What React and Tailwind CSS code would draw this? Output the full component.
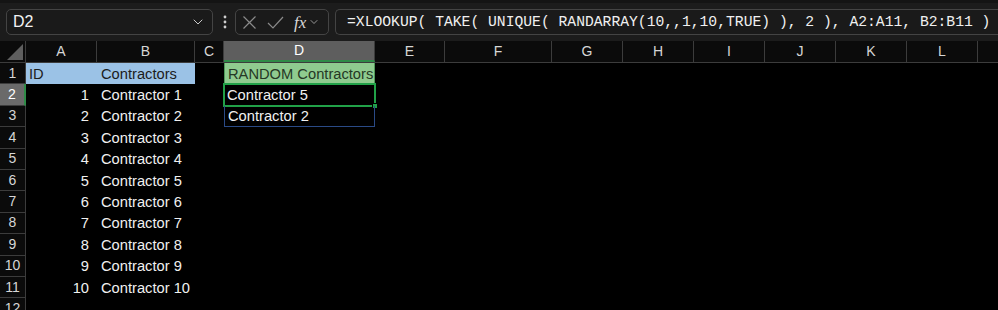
import React from 'react';
import { ChevronDown } from 'lucide-react';

const cols = [
  { name: 'A', w: 'w-[71px]' },
  { name: 'B', w: 'w-[98px]' },
  { name: 'C', w: 'w-[29px]' },
  { name: 'D', w: 'w-[151px]' },
  { name: 'E', w: 'w-[70px]' },
  { name: 'F', w: 'w-[107px]' },
  { name: 'G', w: 'w-[71px]' },
  { name: 'H', w: 'w-[71px]' },
  { name: 'I', w: 'w-[71px]' },
  { name: 'J', w: 'w-[71px]' },
  { name: 'K', w: 'w-[71px]' },
  { name: 'L', w: 'w-[71px]' },
  { name: '', w: 'w-[71px]' },
];

const rows = Array.from({ length: 12 }, (_, i) => i + 1);

const Toolbar = () => (
  <div className="h-[38px] bg-[#1c1c1c] flex items-center shrink-0">
    {/* Cuadro de nombre */}
    <div className="ml-[6px] w-[207px] h-[26px] rounded-[5px] border border-[#444] bg-[#1a1a1a] flex items-center justify-between pl-[6px] pr-[6px]">
      <span className="text-[16px] text-[#f2f2f2]">D2</span>
      <ChevronDown size={16} strokeWidth={1.5} className="text-[#c8c8c8]" />
    </div>

    <svg width="4" height="14" viewBox="0 0 4 14" className="ml-[10px] mr-[8px]">
      <circle cx="2" cy="2" r="1.4" fill="#cfcfcf" />
      <circle cx="2" cy="7" r="1.4" fill="#cfcfcf" />
      <circle cx="2" cy="12" r="1.4" fill="#cfcfcf" />
    </svg>

    {/* Cancelar / aceptar / fx */}
    <div className="w-[94px] h-[26px] rounded-[5px] border border-[#444] bg-[#1a1a1a] flex items-center pl-[6px] gap-[6px]">
      <svg width="15" height="15" viewBox="0 0 15 15">
        <path d="M1.5 1.5 L13.5 13.5 M13.5 1.5 L1.5 13.5" stroke="#8a8a8a" strokeWidth="1.2" fill="none" />
      </svg>
      <svg width="17" height="15" viewBox="0 0 17 15" className="ml-[4px]">
        <path d="M1 8 L6 13 L16 2" stroke="#8a8a8a" strokeWidth="1.2" fill="none" />
      </svg>
      <span className="ml-[4px] text-[17px] italic text-[#d8d8d8] leading-none" style={{ fontFamily: '"Liberation Serif", serif' }}>fx</span>
      <ChevronDown size={12} strokeWidth={1.5} className="text-[#bdbdbd] -ml-[4px]" />
    </div>

    {/* Barra de fórmulas */}
    <div className="ml-[6px] flex-1 h-[26px] rounded-l-[5px] border border-r-0 border-[#444] bg-[#1a1a1a] flex items-center pl-[11px] overflow-hidden">
      <span className="text-[14.7px] text-[#f0f0f0] whitespace-pre" style={{ fontFamily: '"Liberation Mono", monospace' }}>
        =XLOOKUP( TAKE( UNIQUE( RANDARRAY(10,,1,10,TRUE) ), 2 ), A2:A11, B2:B11 )
      </span>
    </div>
  </div>
);

const cellContent = (r, c) => {
  if (r === 1 && c === 'A') return { text: 'ID', cls: 'bg-[#9bc2e6] text-[#1c1c1c] pl-[3px]' };
  if (r === 1 && c === 'B') return { text: 'Contractors', cls: 'bg-[#9bc2e6] text-[#1c1c1c] pl-[4px]' };
  if (r === 1 && c === 'D') return { text: 'RANDOM Contractors', cls: 'bg-[#8fcb8f] text-[#253825] pl-[3px] border-x border-[#4f9a5a] text-[14.4px]' };
  if (r >= 2 && r <= 11 && c === 'A') return { text: String(r - 1), cls: 'justify-end pr-[8px] text-[#f0f0f0]' };
  if (r >= 2 && r <= 11 && c === 'B') return { text: `Contractor ${r - 1}`, cls: 'pl-[4px] text-[#f0f0f0]' };
  if (r === 2 && c === 'D') return { text: 'Contractor 5', cls: 'pl-[3px] text-[#f0f0f0]', sel: true };
  if (r === 3 && c === 'D') return { text: 'Contractor 2', cls: 'pl-[3px] text-[#f0f0f0] border-x border-b border-[#2a4a86]' };
  return { text: '', cls: '' };
};

const App = () => {
  return (
    <div className="w-[998px] h-[310px] bg-black overflow-hidden flex flex-col" style={{ fontFamily: '"Liberation Sans", Arial, sans-serif' }}>
      <div className="h-[3px] bg-[#141414] shrink-0" />
      <Toolbar />

      {/* Encabezado de columnas */}
      <div className="flex h-[22px] shrink-0 bg-[#0b0b0b] border-b border-[#3c3c3c]">
        <div className="w-[26px] shrink-0 border-r border-[#3c3c3c] flex items-end justify-end p-[2px]">
          <svg width="16" height="16" viewBox="0 0 16 16">
            <polygon points="16,0 16,16 0,16" fill="#5f5f5f" />
          </svg>
        </div>
        {cols.map((c, i) => (
          <div
            key={i}
            className={`${c.w} shrink-0 flex items-center justify-center text-[14px] border-r border-[#3c3c3c] ${c.name === 'D' ? 'bg-[#5e5e5e] text-white border-b-2 border-b-[#2e8b47]' : 'text-[#d6d6d6]'}`}
          >
            {c.name}
          </div>
        ))}
      </div>

      {/* Filas */}
      {rows.map(r => (
        <div key={r} className="flex h-[21.4px] shrink-0">
          <div className={`w-[26px] shrink-0 flex items-center justify-center text-[14px] border-b border-[#3c3c3c] ${r === 2 ? 'bg-[#6a6a6a] text-white border-r-2 border-r-[#2e8b47]' : 'bg-[#0b0b0b] text-[#d6d6d6] border-r border-r-[#3c3c3c]'}`}>
            {r}
          </div>
          {cols.map((c, i) => {
            const cell = cellContent(r, c.name);
            return (
              <div key={i} className={`${c.w} shrink-0 relative flex items-center text-[14.7px] whitespace-nowrap ${cell.cls}`}>
                {cell.text}
                {cell.sel && (
                  <span className="absolute -left-[1px] -right-[1px] -top-[1px] -bottom-[1px] border-2 border-[#21a148] pointer-events-none">
                    <span className="absolute -right-[4px] -bottom-[4px] w-[6px] h-[6px] bg-[#21a148] border border-black" />
                  </span>
                )}
              </div>
            );
          })}
        </div>
      ))}
    </div>
  );
};

export default App;
